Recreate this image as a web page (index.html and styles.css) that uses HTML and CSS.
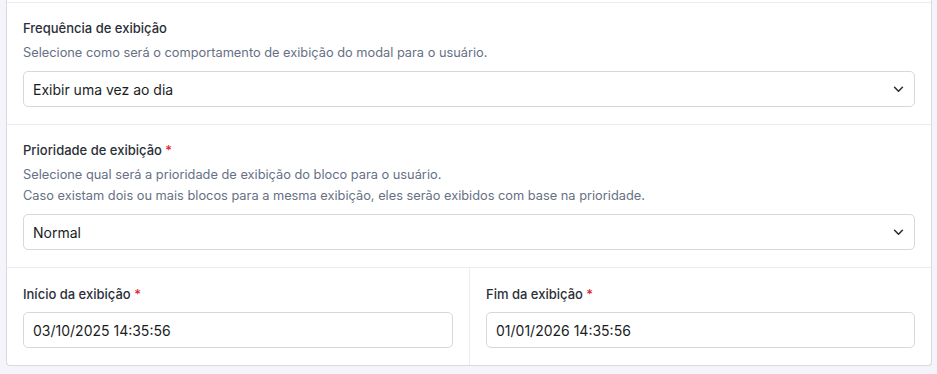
FILE: index.html
```html
<!DOCTYPE html>
<html lang="pt-BR">
<head>
    <meta charset="UTF-8">
    <meta name="viewport" content="width=device-width, initial-scale=1.0">
    <title>Configuração do modal</title>
    <link rel="stylesheet" href="styles.css">
</head>
<body>
    <div class="card">
        <div class="section">
            <label class="label" for="frequencia">Frequência de exibição</label>
            <p class="help">Selecione como será o comportamento de exibição do modal para o usuário.</p>
            <div class="select">
                <span>Exibir uma vez ao dia</span>
                <svg class="chevron" viewBox="0 0 12 8" width="11" height="7"><path d="M1.5 1.5 6 6l4.5-4.5"/></svg>
            </div>
        </div>

        <div class="section">
            <label class="label">Prioridade de exibição <span class="req">*</span></label>
            <p class="help">Selecione qual será a prioridade de exibição do bloco para o usuário.<br>Caso existam dois ou mais blocos para a mesma exibição, eles serão exibidos com base na prioridade.</p>
            <div class="select">
                <span>Normal</span>
                <svg class="chevron" viewBox="0 0 12 8" width="11" height="7"><path d="M1.5 1.5 6 6l4.5-4.5"/></svg>
            </div>
        </div>

        <div class="row">
            <div class="section">
                <label class="label">Início da exibição <span class="req">*</span></label>
                <div class="input">03/10/2025 14:35:56</div>
            </div>
            <div class="section">
                <label class="label">Fim da exibição <span class="req">*</span></label>
                <div class="input">01/01/2026 14:35:56</div>
            </div>
        </div>
    </div>
</body>
</html>
```

FILE: styles.css
```css
body { margin: 0; padding: 0 5px 0 6px; background: #f4f4fa; font-family: Inter, "Noto Sans", sans-serif; color: #1f2937; }
.card { background: #fff; border: 1px solid #d9dae0; border-top: none; border-radius: 0 0 4px 4px; padding-top: 2px; }
.section { border-top: 1px solid #ececf0; padding: 15px 16px 17px; }
.label { display: block; font-size: 13px; line-height: 20px; font-weight: 500; color: #2b2f38; }
.req { color: #e11d2e; }
.help { margin: 4px 0 8px; font-size: 12.8px; line-height: 21px; color: #667085; }
.select, .input { display: flex; align-items: center; height: 36px; box-sizing: border-box; padding: 0 10px 0 9px; border: 1px solid #d5d8de; border-radius: 5px; font-size: 14px; color: #1a1d24; }
.select { justify-content: space-between; }
.chevron { fill: none; stroke: #2b2f38; stroke-width: 1.8; stroke-linecap: round; stroke-linejoin: round; }
.row { display: grid; grid-template-columns: 1fr 1fr; border-top: 1px solid #ececf0; }
.row .section { border-top: none; padding-top: 16px; }
.row .section + .section { border-left: 1px solid #ececf0; }
.row .label { margin-bottom: 8px; }
```
